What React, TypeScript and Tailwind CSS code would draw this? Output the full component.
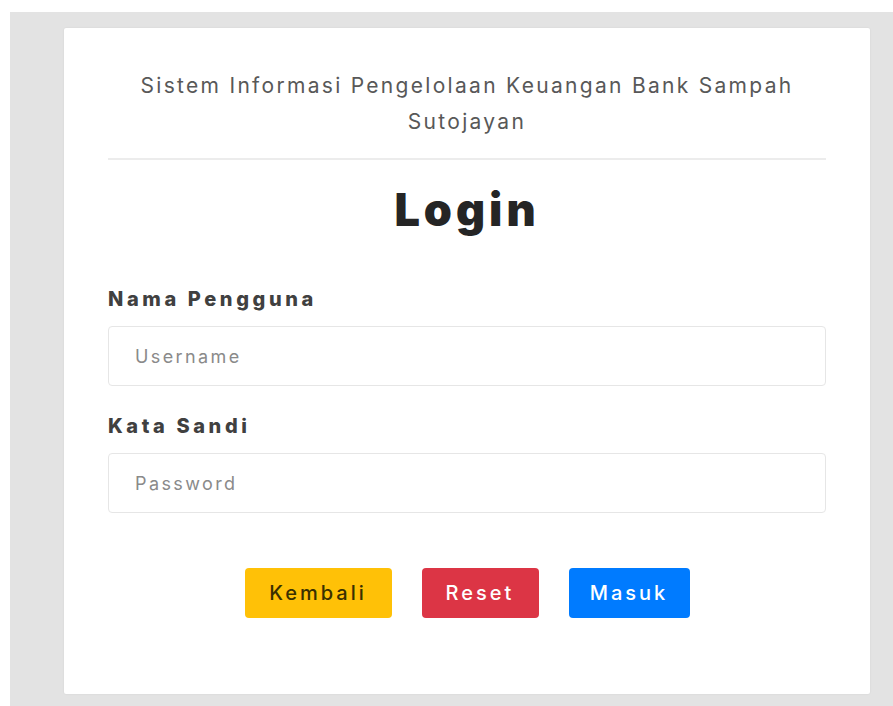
import { useState } from "react";

const font = { fontFamily: '"Inter", "Noto Sans", sans-serif' };

function Field({
  label,
  placeholder,
  type = "text",
  className = "",
}: {
  label: string;
  placeholder: string;
  type?: string;
  className?: string;
}) {
  const [value, setValue] = useState("");
  return (
    <div className={className}>
      <label className="block text-[20px] leading-[28px] font-extrabold tracking-[3.6px] text-[#404040]">
        {label}
      </label>
      <input
        type={type}
        value={value}
        onChange={(e) => setValue(e.target.value)}
        placeholder={placeholder}
        className="mt-[13px] block h-[60px] w-full rounded-[4px] border border-[#e6e6e6] px-[26px] text-[18px] tracking-[2.4px] text-[#333] outline-none placeholder:text-[#8a8a8a]"
      />
    </div>
  );
}

export default function App() {
  return (
    <div className="min-h-[706px] bg-white pl-[10px] pt-[12px]" style={font}>
      <div className="h-[694px] bg-[#e3e3e3] pl-[54px] pr-[23px] pt-[16px]">
        <div className="h-[666px] rounded-[2px] bg-white px-[44px] pt-[40px] shadow-[0_0_2px_rgba(0,0,0,0.08)]">
          <p className="text-center text-[21px] leading-[36px] tracking-[2.3px] text-[#585858]">
            Sistem Informasi Pengelolaan Keuangan Bank Sampah
            <br />
            Sutojayan
          </p>
          <hr className="mt-[18px] border-t-2 border-[#ececec]" />
          <h1 className="mt-[22px] text-center text-[45px] leading-[56px] font-black tracking-[4px] text-[#252525]">
            Login
          </h1>

          <Field label="Nama Pengguna" placeholder="Username" className="mt-[47px]" />
          <Field
            label="Kata Sandi"
            placeholder="Password"
            type="password"
            className="mt-[26px]"
          />

          <div className="mt-[55px] flex justify-center gap-[30px]">
            <button className="h-[50px] w-[147px] rounded-[4px] bg-[#ffc107] text-[20px] font-medium tracking-[3px] text-[#3a3000]">
              Kembali
            </button>
            <button className="h-[50px] w-[117px] rounded-[4px] bg-[#dc3545] text-[20px] font-medium tracking-[3px] text-white">
              Reset
            </button>
            <button className="h-[50px] w-[121px] rounded-[4px] bg-[#007bff] text-[20px] font-medium tracking-[3px] text-white">
              Masuk
            </button>
          </div>
        </div>
      </div>
    </div>
  );
}
